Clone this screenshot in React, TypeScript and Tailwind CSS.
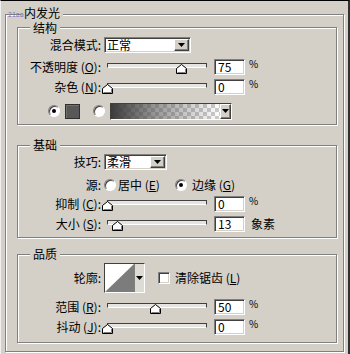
import React from 'react';

const sunken =
  'border border-t-[#808080] border-l-[#808080] border-b-white border-r-white shadow-[inset_1px_1px_0_#404040,inset_-1px_-1px_0_#d4d0c8]';
const raised =
  'border border-t-white border-l-white border-b-[#404040] border-r-[#404040] shadow-[inset_-1px_-1px_0_#808080]';

function Arrow() {
  return (
    <svg width="7" height="4" viewBox="0 0 7 4">
      <path d="M0 0H7L3.5 4Z" fill="#000" />
    </svg>
  );
}

function Group({
  title,
  className,
  legendPos,
  children,
}: {
  title: string;
  className?: string;
  legendPos: string;
  children: React.ReactNode;
}) {
  return (
    <div
      className={`relative border border-[#808080] shadow-[inset_1px_1px_0_#fff,1px_1px_0_#fff] ${className ?? ''}`}
    >
      <div
        className={`absolute ${legendPos} bg-[#d4d0c8] px-[3px] text-[12px] leading-[12px] text-black`}
      >
        {title}
      </div>
      {children}
    </div>
  );
}

function Label({ children }: { children: React.ReactNode }) {
  return <div className="w-[83px] shrink-0 whitespace-nowrap text-right">{children}</div>;
}

function Key({ k }: { k: string }) {
  return (
    <span>
      {' '}(<span className="underline underline-offset-[1px]">{k}</span>)
    </span>
  );
}

function Select({ w, value }: { w: string; value: string }) {
  return (
    <div className={`flex h-[16px] ${w} bg-white p-[1px] ${sunken}`}>
      <div className="flex-1 pl-[1px] leading-[12px]">{value}</div>
      <div className={`flex h-full w-[15px] items-center justify-center bg-[#d4d0c8] ${raised}`}>
        <Arrow />
      </div>
    </div>
  );
}

function Slider({ pos }: { pos: number }) {
  return (
    <div className="relative h-[16px] w-[111px] shrink-0">
      <div className="absolute left-[4px] top-[4px] h-[5px] w-[100px] border border-t-[#404040] border-l-[#404040] border-b-[#ffffff] border-r-[#404040] bg-[#e6e4e0]" />
      <svg
        className="absolute top-[5px]"
        style={{ left: 4 + pos - 5 }}
        width="11"
        height="10"
        viewBox="0 0 11 10"
      >
        <path d="M5.5 0.5L10.5 4.5V9.5H0.5V4.5Z" fill="#fff" stroke="#000" />
        <path d="M9.5 5V8.5H1.5" fill="none" stroke="#808080" />
      </svg>
    </div>
  );
}

function Field({ value }: { value: string }) {
  return (
    <div className={`h-[16px] w-[31px] shrink-0 bg-white pl-[3px] leading-[14px] ${sunken}`}>{value}</div>
  );
}

function Pct() {
  return <div className="ml-[4px] self-start text-[10px] leading-[10px]">%</div>;
}

function Radio({ checked }: { checked?: boolean }) {
  return (
    <div className="relative h-[12px] w-[12px] shrink-0 rounded-full border border-t-[#808080] border-l-[#808080] border-b-white border-r-white bg-white shadow-[inset_1px_1px_0_#404040]">
      {checked && (
        <div className="absolute left-[3px] top-[3px] h-[4px] w-[4px] rounded-full bg-black" />
      )}
    </div>
  );
}

function SliderRow({
  label,
  pos,
  value,
  unit,
  mt,
}: {
  label: React.ReactNode;
  pos: number;
  value: string;
  unit?: string;
  mt: string;
}) {
  return (
    <div className={`flex h-[16px] items-center ${mt}`}>
      <Label>{label}</Label>
      <div className="ml-[2px]">
        <Slider pos={pos} />
      </div>
      <Field value={value} />
      {unit ? <div className="ml-[6px] leading-[16px]">{unit}</div> : <Pct />}
    </div>
  );
}

export default function App() {
  return (
    <div className="relative h-[354px] w-[350px] overflow-hidden border-t border-r-2 border-l border-t-black border-r-[#303030] border-l-[#f0f0f0] bg-[#d4d0c8] font-['Noto_Sans_CJK_SC','Noto_Sans',sans-serif] text-[12px] text-black">
      <Group title="内发光" legendPos="left-[15px] top-[-8px]" className="ml-[4px] mt-[13px] h-[338px] w-[339px] pl-[11px] pt-[12px]">
        <Group title="结构" legendPos="left-[12px] top-[-6px]" className="h-[98px] w-[320px] pt-[8px]">
          <div className="flex h-[16px] items-center mt-[1px]">
            <Label>混合模式:</Label>
            <div className="ml-[3px]">
              <Select w="w-[87px]" value="正常" />
            </div>
          </div>
          <SliderRow label={<>不透明度<Key k="O" />:</>} pos={74} value="75" mt="mt-[6px]" />
          <SliderRow label={<>杂色<Key k="N" />:</>} pos={0} value="0" mt="mt-[4px]" />
          <div className="mt-[8px] flex h-[16px] items-center pl-[30px]">
            <Radio checked />
            <div className="ml-[5px] h-[15px] w-[15px] border border-[#303030] bg-[#585858] shadow-[inset_1px_1px_0_#707070]" />
            <div className="ml-[13px]">
              <Radio />
            </div>
            <div className="ml-[5px] flex h-[17px] w-[122px] border border-t-[#404040] border-l-[#404040] border-b-white border-r-white">
              <div className="h-full flex-1 bg-[repeating-conic-gradient(#cdcdcd_0_25%,#ffffff_0_50%)] bg-[length:8px_8px]">
                <div className="h-full w-full bg-[linear-gradient(to_right,#3c3c3c,rgba(80,80,80,0.6)_40%,rgba(255,255,255,0))]" />
              </div>
              <div className={`flex h-full w-[11px] items-center justify-center bg-[#d4d0c8] ${raised}`}>
                <Arrow />
              </div>
            </div>
          </div>
        </Group>

        <Group title="基础" legendPos="left-[12px] top-[-7px]" className="mt-[20px] h-[93px] w-[320px] pt-[8px]">
          <div className="flex h-[16px] items-center">
            <Label>技巧:</Label>
            <div className="ml-[3px]">
              <Select w="w-[63px]" value="柔滑" />
            </div>
          </div>
          <div className="mt-[7px] flex h-[16px] items-center">
            <Label>源:</Label>
            <div className="ml-[3px]">
              <Radio />
            </div>
            <div className="ml-[2px] w-[57px] whitespace-nowrap">
              居中<Key k="E" />
            </div>
            <Radio checked />
            <div className="ml-[5px] whitespace-nowrap">
              边缘<Key k="G" />
            </div>
          </div>
          <SliderRow label={<>抑制<Key k="C" />:</>} pos={0} value="0" mt="mt-[3px]" />
          <SliderRow label={<>大小<Key k="S" />:</>} pos={10} value="13" unit="象素" mt="mt-[4px]" />
        </Group>

        <Group title="品质" legendPos="left-[12px] top-[-7px]" className="mt-[16px] h-[89px] w-[320px] pt-[8px]">
          <div className="flex h-[30px] items-center">
            <Label>轮廓:</Label>
            <div className="ml-[3px] flex h-[30px] w-[41px] border border-t-[#404040] border-l-[#404040] border-b-white border-r-white">
              <svg width="29" height="28" viewBox="0 0 29 28" className="shrink-0">
                <rect width="29" height="28" fill="#fff" />
                <path d="M0 28L29 0V28Z" fill="#7c7c7c" />
              </svg>
              <div className="flex h-full flex-1 items-center justify-center border-l border-[#808080] bg-[#dedad4]">
                <Arrow />
              </div>
            </div>
            <div className={`ml-[13px] h-[12px] w-[12px] bg-white ${sunken}`} />
            <div className="ml-[5px] whitespace-nowrap">
              清除锯齿<Key k="L" />
            </div>
          </div>
          <SliderRow label={<>范围<Key k="R" />:</>} pos={48} value="50" mt="mt-[6px]" />
          <SliderRow label={<>抖动<Key k="J" />:</>} pos={0} value="0" mt="mt-[4px]" />
        </Group>
      </Group>
      <div className="absolute left-[7px] top-[10px] text-[7px] leading-[7px] text-[#7070b8]">21aa</div>
    </div>
  );
}
